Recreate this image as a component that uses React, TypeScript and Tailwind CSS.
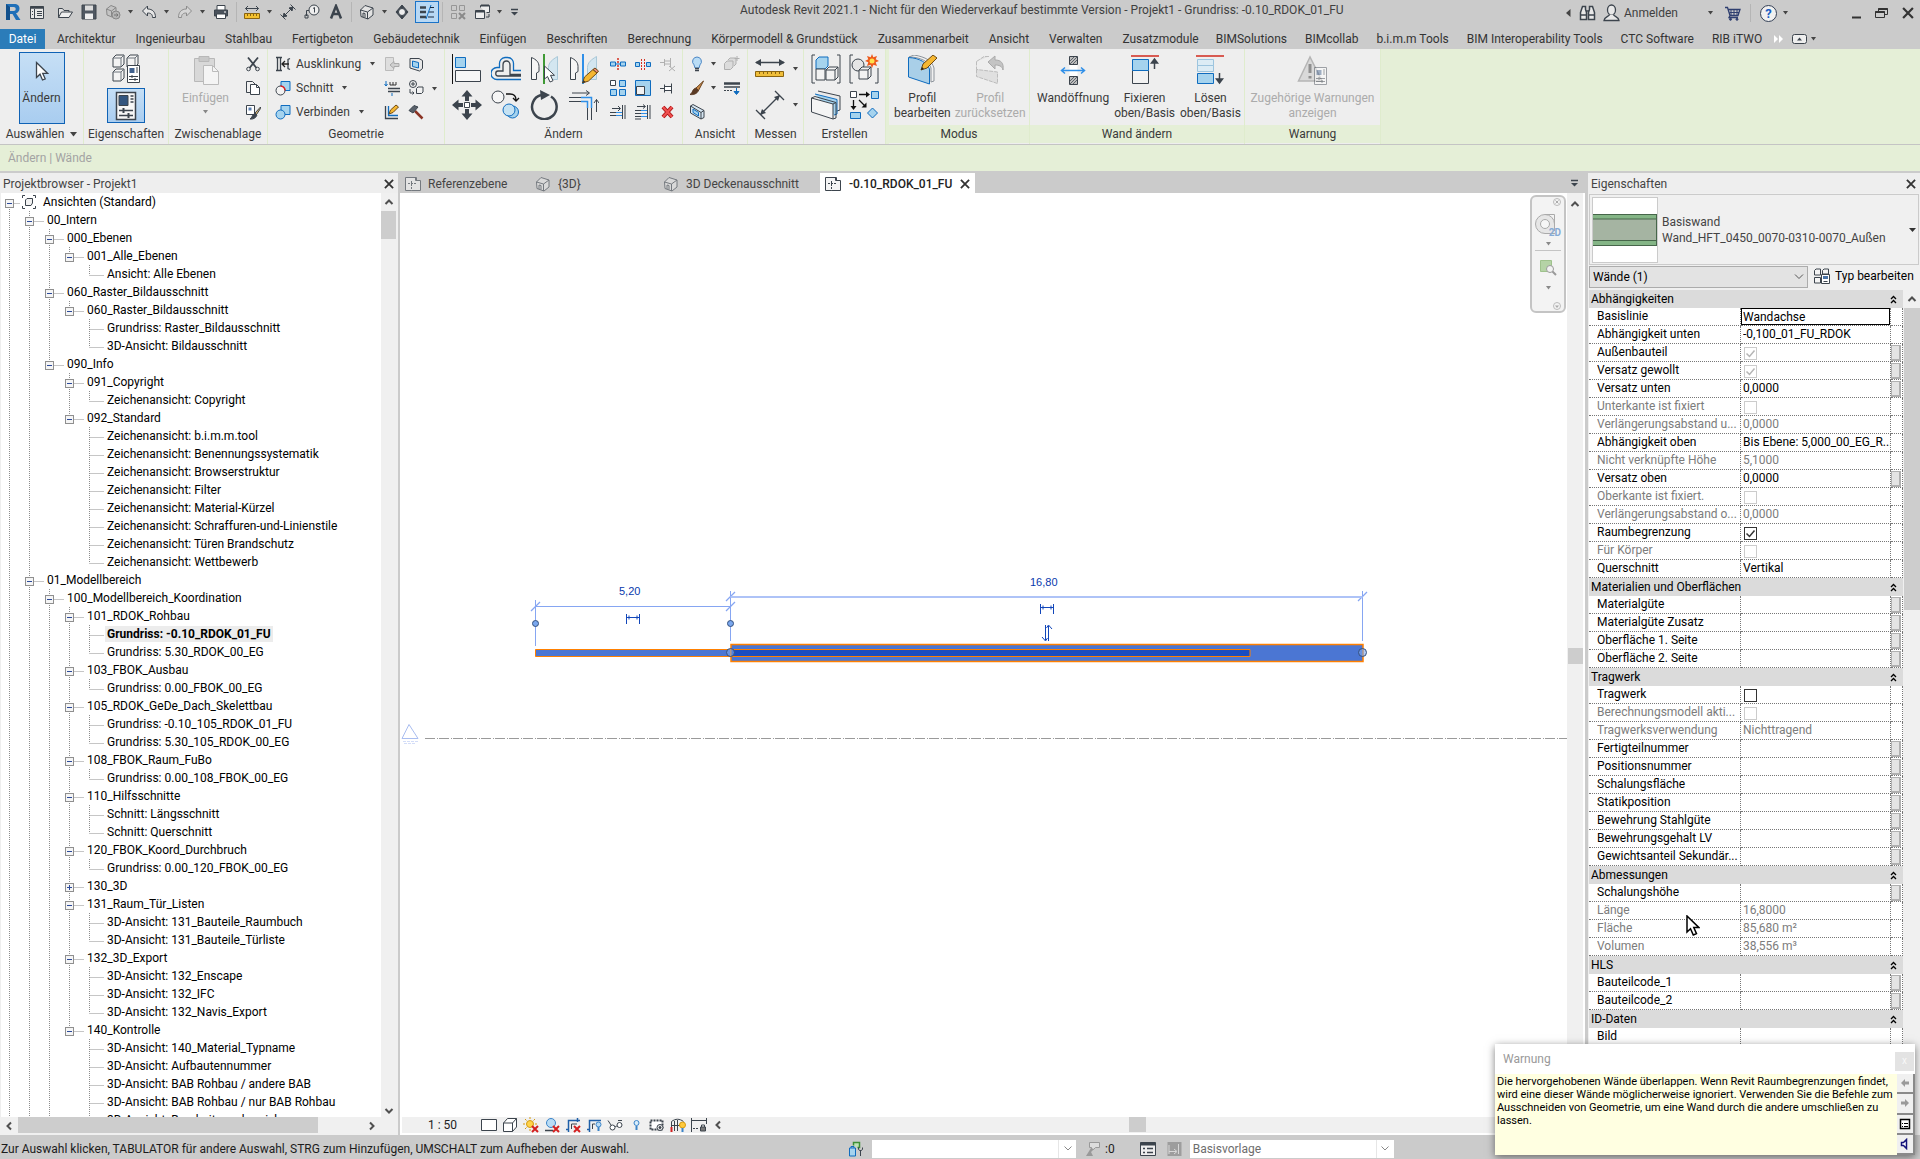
import React from 'react';

const INK = '#3c444d';
const BLUE = '#0f6cbf';
const SKY = '#a5d3ee';

interface IcoProps {
  w?: number;
  h?: number;
  children: React.ReactNode;
  className?: string;
}

function Ico({ w = 16, h = w, children, className = '' }: IcoProps) {
  return (
    <svg
      width={w}
      height={h}
      viewBox={`0 0 ${w} ${h}`}
      fill="none"
      stroke={INK}
      className={`shrink-0 ${className}`}
      aria-hidden="true"
    >
      {children}
    </svg>
  );
}

function Caret({ className = '' }: { className?: string }) {
  return (
    <Ico w={5} h={4} className={className}>
      <path d="M0 0h5L2.5 3.5z" fill="#444" stroke="none" />
    </Ico>
  );
}

function Chevron({ dir, className = '' }: { dir: 'up' | 'down' | 'left' | 'right'; className?: string }) {
  const d = {
    up: 'M1.5 7 5 3.5 8.5 7',
    down: 'M1.5 3 5 6.5 8.5 3',
    left: 'M7 1.5 3.5 5 7 8.5',
    right: 'M3 1.5 6.5 5 3 8.5',
  }[dir];
  return (
    <Ico w={10} className={className}>
      <path d={d} stroke="#505050" strokeWidth="2" />
    </Ico>
  );
}

function CloseX({ size = 11 }: { size?: number }) {
  return (
    <svg width={size} height={size} viewBox="0 0 11 11" stroke="#333" strokeWidth="2" aria-hidden="true">
      <path d="M1 1l9 9M10 1l-9 9" />
    </svg>
  );
}

function Arrow({ className = '' }: { className?: string }) {
  return (
    <Ico w={14} h={21} className={className}>
      <path d="M1.5 1.5v15l3.5-3.3 2.5 5.8 2.7-1.2-2.5-5.5h4.8z" fill="#fff" strokeWidth="1.3" />
    </Ico>
  );
}

/* ---------- quick access toolbar ---------- */

const qat: Record<string, React.ReactNode> = {
  list: (
    <Ico>
      <path d="M1.5 2.5h13v12h-13z" fill="#e8e8e8" />
      <path d="M1.5 3.5h13" strokeWidth="2.5" />
      <path d="M5.5 5v9M8 7.5h5M8 9.5h5M8 11.5h5M3 7.5h1M3 10.5h1" />
    </Ico>
  ),
  open: (
    <Ico>
      <path d="M1.5 13.5v-9h4l1.5 2h5v2" fill="#e4e4e4" />
      <path d="M1.5 13.5l3-5.5h11l-3.5 5.5z" fill="#eee" />
    </Ico>
  ),
  save: (
    <Ico>
      <path d="M1 1h14v14H1z" fill="#505862" />
      <path d="M4 1.5h8v5H4z" fill="#dcdcdc" stroke="none" />
      <path d="M4 9.5h8v5.5H4z" fill="#efefef" stroke="none" />
    </Ico>
  ),
  sync: (
    <Ico>
      <path d="M1.5 5 6 1.5l5 2V9L7 13 2 11z" fill="#c4c4c4" stroke="#888" />
      <path d="M1.5 5l5 2 4.5-3.5M6.5 7v5.5" stroke="#888" />
      <circle cx="11" cy="11" r="4" fill="#b5b5b5" stroke="#888" />
      <path d="M9 11h4M11.5 9.5 13 11l-1.5 1.5" stroke="#777" />
    </Ico>
  ),
  undo: (
    <Ico>
      <path d="M1.5 7l5-5v3c5 0 8 3 8 8.5h-3c0-3.5-2-4.5-5-4.5v3z" fill="#e6e6e6" />
    </Ico>
  ),
  redo: (
    <Ico>
      <path d="M14.5 7l-5-5v3c-5 0-8 3-8 8.5h3c0-3.5 2-4.5 5-4.5v3z" fill="#d6d6d6" stroke="#8c8c8c" />
    </Ico>
  ),
  print: (
    <Ico>
      <path d="M4 6V1.5h8V6" fill="#fff" />
      <path d="M1.5 6h13v6h-13z" fill="#4a525c" />
      <path d="M3.5 10h9v4.5h-9z" fill="#fff" />
      <path d="M11 8h2" stroke="#fff" />
    </Ico>
  ),
  measure: (
    <Ico>
      <path d="M1.5 4.5h13M4 2 1.5 4.5 4 7M12 2l2.5 2.5L12 7" />
      <path d="M.5 9.5h15v5H.5z" fill="#f4c12f" stroke="#8a6410" />
      <path d="M3.5 10v2M6.5 10v2M9.5 10v2M12.5 10v2" stroke="#8a6410" />
    </Ico>
  ),
  dim: (
    <Ico>
      <path d="M3 13 13 3" />
      <path d="M3 13l1-4 3 3zM13 3l-1 4-3-3z" fill={INK} />
      <path d="M.5 10.5l5 5M10.5.5l5 5" />
    </Ico>
  ),
  tag: (
    <Ico>
      <circle cx="10" cy="6" r="5" fill="#eee" />
      <path d="M9 4.5 10.5 3.5v5M5 6.5H2.5V12" />
      <path d="M1 11h3v3H1z" />
    </Ico>
  ),
  text: (
    <Ico>
      <path d="M3 14.5 8 2l5 12.5M5 10h6" strokeWidth="2.5" />
    </Ico>
  ),
  house: (
    <Ico>
      <path d="M1.5 6 6 1.5l8 2.5v7l-5 4-7-2.5z" fill="#e3e3e3" />
      <path d="M1.5 6l7 2 5.5-4M8.5 8v7M4 13V9l2 .5v4" />
    </Ico>
  ),
  section: (
    <Ico w={14} h={16}>
      <path d="M7 1l6 7-6 7-6-7z" fill={INK} />
      <circle cx="7" cy="8" r="3.5" fill="#eee" />
    </Ico>
  ),
  thin: (
    <Ico>
      <path d="M1 3.5h6M1 8h6M1 13h6" strokeWidth="2.5" />
      <path d="M12 1 7 15" stroke={BLUE} />
      <path d="M11 3.5h4M10 8h5M9 13h6" stroke="#1b2b40" />
    </Ico>
  ),
  closeWin: (
    <Ico>
      <path d="M1.5 1.5h5v5h-5zM9.5 1.5h5v5h-5zM1.5 9.5h5v5h-5z" stroke="#979797" />
      <path d="M9 9l6 6M15 9l-6 6" stroke="#8a8a8a" strokeWidth="2" />
    </Ico>
  ),
  switchWin: (
    <Ico>
      <path d="M6.5 3.5V1.5h9v7h-3" fill="#eee" />
      <path d="M1.5 6.5h9v8h-9z" fill="#eee" />
      <path d="M1.5 7.5h9M7 1.5h8" strokeWidth="2" />
      <path d="M12 13h3v-3" />
    </Ico>
  ),
};

function QatButton({ name, label, menu = false }: { name: string; label: string; menu?: boolean }) {
  return (
    <button type="button" aria-label={label} className="flex shrink-0 items-center gap-[7px]">
      {qat[name]}
      {menu && <Caret />}
    </button>
  );
}

function QatSep() {
  return <span className="-mx-px h-5 w-px shrink-0 bg-[#b5b5b5]" />;
}

function TitleBar() {
  return (
    <header className="flex h-[29px] items-start bg-[#cbcbcb] pl-[5px] text-[#3f3f3f]">
      <div className="flex h-6 w-[735px] items-center gap-2">
        <svg width="16" height="18" viewBox="0 0 16 18" aria-hidden="true" className="shrink-0">
          <path d="M1 1h8c4 0 5.5 2 5.5 4.5S13 9.7 11 10.3L15.5 17H11L7.5 11H5v6H1z" fill="#1f6fb8" />
          <path d="M5 4v4h3.5c1.5 0 2.2-.8 2.200-2S10 4 8.500 4z" fill="#cbcbcb" />
          <path d="M1 1l4 3v13H1z" fill="#12508c" />
        </svg>
        <QatButton name="list" label="Anwendungsmenü" />
        <span className="w-1" />
        <div className="-ml-2 flex items-center gap-2">
          <QatButton name="open" label="Öffnen" />
          <QatButton name="save" label="Speichern" />
          <QatButton name="sync" label="Synchronisieren" menu />
          <QatButton name="undo" label="Rückgängig" menu />
          <QatButton name="redo" label="Wiederherstellen" menu />
          <QatButton name="print" label="Drucken" />
        </div>
        <QatSep />
        <QatButton name="measure" label="Messen" menu />
        <QatButton name="dim" label="Bemaßung" />
        <QatButton name="tag" label="Beschriftung" />
        <QatButton name="text" label="Text" />
        <QatSep />
        <QatButton name="house" label="3D-Ansicht" menu />
        <QatButton name="section" label="Schnitt" />
        <div className="-ml-[2px] flex items-center gap-1">
          <button
            type="button"
            aria-label="Dünne Linien"
            className="flex h-[22px] w-6 items-center justify-center border border-[#1a73c8] bg-[#b8d8f4]"
          >
            {qat.thin}
          </button>
          <QatSep />
        </div>
        <QatButton name="closeWin" label="Inaktive Fenster schließen" />
        <QatButton name="switchWin" label="Fenster wechseln" menu />
        <button type="button" aria-label="Anpassen">
          <Ico w={9} h={8}>
            <path d="M1 1.5h7" strokeWidth="1.5" />
            <path d="M1 4h7L4.5 7.5z" fill={INK} stroke="none" />
          </Ico>
        </button>
      </div>
      <h1 className="mt-[2px] whitespace-nowrap leading-4">
        Autodesk Revit 2021.1 - Nicht für den Wiederverkauf bestimmte Version - Projekt1 - Grundriss: -0.10_RDOK_01_FU
      </h1>
      <div className="ml-auto flex h-[26px] items-center pr-[6px]">
        <Ico w={5} h={8} className="mr-2">
          <path d="M4.5 0v8L0 4z" fill="#444" stroke="none" />
        </Ico>
        <button type="button" aria-label="Suchen">
          <Ico w={17} h={16}>
            <path d="M3.5 1.5h3v3l1 3v7h-6v-7zM13.5 1.5h-3v3l-1 3v7h6v-7z" fill="#e8e8e8" strokeWidth="1.5" />
            <path d="M7 6h3M2 10h5M10 10h5" strokeWidth="1.5" />
          </Ico>
        </button>
        <button type="button" className="ml-[7px] flex items-center gap-1">
          <Ico w={17} h={18}>
            <ellipse cx="8.5" cy="6" rx="4" ry="5" fill="#e8e8e8" strokeWidth="1.3" />
            <path d="M6.5 10.5c0 2-5 2-5.5 6h15c-.5-4-5.5-4-5.5-6" fill="#e8e8e8" strokeWidth="1.3" />
          </Ico>
          Anmelden
        </button>
        <Caret className="ml-[30px]" />
        <button type="button" aria-label="Warenkorb" className="ml-3">
          <Ico>
            <path d="M0 2.5h2.5l2.5 8h8l2-6H3.5M5 10.5l-1 2h9" stroke="#2f3f70" strokeWidth="1.3" />
            <path d="M6 5v5M9 5v5M12 5v5M4.5 7.5H14" stroke="#2f3f70" />
            <circle cx="5.5" cy="14.3" r="1" fill="#2f3f70" stroke="#2f3f70" />
            <circle cx="12" cy="14.3" r="1" fill="#2f3f70" stroke="#2f3f70" />
          </Ico>
        </button>
        <span className="mx-[9px] h-[18px] w-px bg-[#b5b5b5]" />
        <button
          type="button"
          aria-label="Hilfe"
          className="flex h-[17px] w-[17px] items-center justify-center rounded-full border border-[#333f55] bg-[#f1f1f1] text-[13px] font-bold leading-none text-[#1b5fc4]"
        >
          ?
        </button>
        <Caret className="ml-[6px]" />
        <div className="ml-16 flex items-center gap-[14px]">
          <button type="button" aria-label="Minimieren">
            <Ico w={9} h={12}>
              <path d="M0 10.5h9" stroke="#333" strokeWidth="2" />
            </Ico>
          </button>
          <button type="button" aria-label="Verkleinern">
            <Ico w={13} h={12}>
              <path d="M3.5 4V1.5h9v6H9.5" stroke="#333" />
              <path d="M.5 4.5h9v6h-9z" stroke="#333" />
              <path d="M3.5 2h9M.5 5h9" stroke="#333" strokeWidth="2" />
            </Ico>
          </button>
          <button type="button" aria-label="Schließen">
            <CloseX size={12} />
          </button>
        </div>
      </div>
    </header>
  );
}

/* ---------- ribbon ---------- */

const ribbonTabs = [
  'Architektur',
  'Ingenieurbau',
  'Stahlbau',
  'Fertigbeton',
  'Gebäudetechnik',
  'Einfügen',
  'Beschriften',
  'Berechnung',
  'Körpermodell & Grundstück',
  'Zusammenarbeit',
  'Ansicht',
  'Verwalten',
  'Zusatzmodule',
];

const addinTabs = [
  'BIMSolutions',
  'BIMcollab',
  'b.i.m.m Tools',
  'BIM Interoperability Tools',
  'CTC Software',
  'RIB iTWO',
];

function RibbonTabs() {
  return (
    <nav className="flex h-5 items-center whitespace-nowrap bg-[#cbcbcb] text-[#333]">
      <button type="button" className="mr-3 h-full w-[45px] shrink-0 bg-[#2b7cb9] text-white">
        Datei
      </button>
      <div className="flex gap-5">
        {ribbonTabs.map((tab) => (
          <button type="button" key={tab}>
            {tab}
          </button>
        ))}
      </div>
      <div className="ml-[17px] flex gap-[18px]">
        {addinTabs.map((tab) => (
          <button type="button" key={tab}>
            {tab}
          </button>
        ))}
      </div>
      <Ico w={10} h={8} className="ml-3">
        <path d="M0 0l4 4-4 4zM5 0l4 4-4 4z" fill="#fff" stroke="none" />
      </Ico>
      <button type="button" aria-label="Multifunktionsleiste minimieren" className="ml-2 flex items-center gap-1">
        <Ico w={15} h={10}>
          <rect x=".5" y=".5" width="14" height="9" rx="2" fill="#eee" />
          <path d="M5 6.5h5L7.5 3.5z" fill={INK} stroke="none" />
        </Ico>
        <Caret />
      </button>
    </nav>
  );
}

interface PanelProps {
  title: string;
  width: string;
  body?: string;
  context?: boolean;
  more?: boolean;
  children: React.ReactNode;
}

function Panel({ title, width, body = '', context = false, more = false, children }: PanelProps) {
  return (
    <section className={`flex shrink-0 flex-col border-r border-[#dfeccd] bg-[#eeeeee] ${width}`}>
      <div className={`flex h-[76px] pt-[3px] ${body}`}>{children}</div>
      <h2
        className={`flex h-[18px] items-center justify-center gap-[6px] whitespace-nowrap ${context ? 'bg-[#e5efd7]' : ''}`}
      >
        {title}
        {more && (
          <Ico w={7} h={5}>
            <path d="M0 0h7L3.5 4.5z" fill="#444" stroke="none" />
          </Ico>
        )}
      </h2>
    </section>
  );
}

function Small({ label, children }: { label: string; children: React.ReactNode }) {
  return (
    <button type="button" aria-label={label} className="flex h-6 items-center">
      {children}
    </button>
  );
}

function SmallText({ text, children }: { text: string; children: React.ReactNode }) {
  return (
    <button type="button" className="flex h-6 items-center gap-[5px]">
      {children}
      {text}
      <Caret className="ml-1" />
    </button>
  );
}

function LargeButton({
  lines,
  disabled = false,
  children,
}: {
  lines: string[];
  disabled?: boolean;
  children: React.ReactNode;
}) {
  return (
    <button
      type="button"
      disabled={disabled}
      className={`flex flex-col items-center whitespace-nowrap leading-[15px] ${disabled ? 'text-[#ababab]' : ''}`}
    >
      <span className="flex h-[39px] items-start pt-[3px]">{children}</span>
      {lines.map((l) => (
        <span key={l}>{l}</span>
      ))}
    </button>
  );
}

function Notch() {
  return (
    <Ico>
      <path d="M1 1.5h6M1 14.5h6M2.5 2v12M5.5 2v12M15 2.5l-2 1v9l2 1" strokeWidth="1.3" />
      <path d="M14 8H7M10 5 7 8l3 3" stroke="#222" strokeWidth="1.3" />
    </Ico>
  );
}

function CutGeo({ joined = false }: { joined?: boolean }) {
  return (
    <Ico>
      <path d="M6 1.5h9v9H6z" fill={SKY} stroke={BLUE} />
      <circle cx="5.5" cy="10.5" r="4.5" fill={joined ? SKY : '#f2f2f2'} stroke={joined ? BLUE : INK} />
      {!joined && <path d="M5.5 6a4.5 4.5 0 0 1 4.5 4.5" stroke="#e02020" strokeWidth="1.5" />}
    </Ico>
  );
}

function Mirror({ pencil = false }: { pencil?: boolean }) {
  return (
    <Ico w={30}>
      <path d="M1.5 3.5c5 2 7.5 5 7.5 9v5l-2.5 1.5v6.5h-5z" fill="#f6f6f6" />
      <path d="M27.5 2.5c-5 3-9 6-9 11v12h9z" fill="#d3e6f0" stroke="#a9c8d8" />
      {pencil ? (
        <>
          <path d="M14 0v30" stroke="#2f8fe8" strokeWidth="2" />
          <path d="M13.5 29l2-6L24 15.5l4 3.5-8.5 8z" fill="#f5b731" stroke="#6f4a12" />
          <path d="M13.5 29l1-3 2 2z" fill="#333" stroke="none" />
          <path d="M24 15.5l2-1.5 3.5 3-1.5 2z" fill="#e98b79" stroke="#6f4a12" />
        </>
      ) : (
        <>
          <path d="M14 0v30" stroke="#3f9a35" strokeWidth="2" />
          <path d="M14.5 12v13l3-2.5 2.5 5.5 3-1.3-2.5-5.4h4z" fill="#fff" />
        </>
      )}
    </Ico>
  );
}

function PropsSheet({ x, y }: { x: number; y: number }) {
  return (
    <g transform={`translate(${x} ${y})`}>
      <path d="M.5.5h12v17H.5z" fill="#fff" />
      <path d="M2.5 3h5v5h-5z" fill="#41628f" stroke="none" />
      <path d="M9 3h2M9 5h2M9 7h2M2 11.5h9M2 14.5h9M5 10v3M8 13v3" />
    </g>
  );
}

function Ribbon() {
  return (
    <div className="flex h-24 border-b border-[#c4c4c4] bg-[#e5efd7] text-[#3a3a3a]">
      <Panel title="Auswählen" width="w-[84px]" body="justify-center" more>
        <button
          type="button"
          className="flex h-[72px] w-[46px] flex-col items-center border border-[#0f62b5] bg-linear-to-b from-[#c6dff5] to-[#a9cdf0] pt-2"
        >
          <Arrow />
          <span className="mt-2 leading-4">Ändern</span>
        </button>
      </Panel>

      <Panel title="Eigenschaften" width="w-[85px]" body="flex-col items-center">
        <button type="button" aria-label="Typeneigenschaften" className="mt-[2px]">
          <Ico w={30}>
            <path d="M2 4l3-3h8v9l-3 3H2zM16 4l3-3h8v9l-3 3h-8zM2 18l3-3h8v9l-3 3H2z" fill="#f3f3f3" />
            <path d="M2 4h8v9M10 4l3-3M16 4h8v9M24 4l3-3M2 18h8v9M10 18l3-3" stroke="#6d747c" />
            <PropsSheet x={16} y={11} />
          </Ico>
        </button>
        <button
          type="button"
          aria-label="Eigenschaften"
          className="mt-1 flex h-[35px] w-[38px] items-center justify-center border border-[#0f62b5] bg-linear-to-b from-[#c6dff5] to-[#a9cdf0]"
        >
          <Ico w={22} h={30}>
            <path d="M1.5 1.5h19v27h-19z" fill="#f7f7f7" strokeWidth="1.5" />
            <path d="M4 4.5h9v10H4z" fill="#34567f" />
            <path d="M15.5 5h3M15.5 8h3M15.5 11h3M4 19.5h14M4 24.5h14" strokeWidth="1.5" />
            <path d="M8.5 17v5M13.5 22v5" strokeWidth="2" />
          </Ico>
        </button>
      </Panel>

      <Panel title="Zwischenablage" width="w-[99px]" body="justify-end gap-4 pr-[6px]">
        <button type="button" disabled className="flex flex-col items-center text-[#ababab]">
          <Ico w={28} h={30} className="mt-[3px]">
            <path d="M2.5 3.5h20v23h-20z" fill="#d8d8d8" stroke="#b8b8b8" />
            <path d="M7 1.5h10v5H7z" fill="#c8c8c8" stroke="#b8b8b8" />
            <path d="M11.5 10.5h9l6 6v13h-15z" fill="#f4f4f4" stroke="#bbb" />
            <path d="M20.5 10.5v6h6" stroke="#bbb" />
          </Ico>
          <span className="mt-[5px] leading-4">Einfügen</span>
          <Caret className="mt-1 opacity-60" />
        </button>
        <div className="flex flex-col">
          <Small label="Ausschneiden">
            <Ico>
              <path d="M3 1.5 11.5 12M13 1.5 4.5 12" strokeWidth="1.8" />
              <circle cx="3.5" cy="13" r="1.8" />
              <circle cx="12.5" cy="13" r="1.8" />
            </Ico>
          </Small>
          <Small label="Kopieren">
            <Ico>
              <path d="M1.5 1.5h6l3 3v8h-9z" fill="#f2f2f2" />
              <path d="M5.5 4.5h6l3 3v7h-9z" fill="#fff" />
              <path d="M11.5 4.5v3h3" />
            </Ico>
          </Small>
          <Small label="Typeneigenschaften anpassen">
            <Ico>
              <path d="M1.5 1.5h8v9h-8z" fill="#fff" />
              <path d="M3.5 3.5h3v3h-3z" fill="#5a7fb0" stroke="none" />
              <path d="M15.5 3 10 9l1.5 1.5 4-6z" fill="#d8b26a" />
              <path d="M10 9l2 2c-1 3-4 4.5-7 4 2-1 2-4 5-6z" fill={INK} />
            </Ico>
          </Small>
        </div>
      </Panel>

      <Panel title="Geometrie" width="w-[177px]" body="pl-[7px]">
        <div className="flex w-[109px] flex-col">
          <SmallText text="Ausklinkung">
            <Notch />
          </SmallText>
          <SmallText text="Schnitt">
            <CutGeo />
          </SmallText>
          <SmallText text="Verbinden">
            <CutGeo joined />
          </SmallText>
        </div>
        <div className="flex flex-col">
          <Small label="Verbindung">
            <Ico>
              <path d="M1.5 1.5h8v13h-8z" fill="#dedede" stroke="#bbb" />
              <path d="M6 9l4-3.5V7.5h5v3h-5v2z" fill="#d0d0d0" stroke="#aaa" />
            </Ico>
          </Small>
          <Small label="Bauteil ausschneiden">
            <Ico>
              <path d="M2 1v5M.5 4 2 6l1.5-2" stroke={BLUE} />
              <path d="M6 2v3h6V2M9 2v3" stroke="#333" />
              <path d="M4 8.5h12M4 11.5h12" strokeWidth="1.5" />
              <path d="M8 13v3" stroke={BLUE} />
            </Ico>
          </Small>
          <Small label="Wandverbindung">
            <Ico>
              <path d="M1.5 2v12.5H14" strokeWidth="1.3" />
              <path d="M4.5 2v9.5H14" stroke={BLUE} strokeWidth="1.3" />
              <path d="M5 10l1.5-4L12 1l2.5 2L9 8.5z" fill="#f5b731" stroke="#6f4a12" />
            </Ico>
          </Small>
        </div>
        <div className="ml-2 flex flex-col">
          <Small label="Öffnung">
            <Ico>
              <path d="M2 2.5h9l3.5 2v8l-3 2.5-9.5-3z" fill="#e8e8e8" />
              <path d="M4.5 5l6 1.5v5.5l-6-1.5z" fill={SKY} stroke={BLUE} />
            </Ico>
          </Small>
          <Small label="Phase">
            <Ico>
              <circle cx="5" cy="4" r="3.5" />
              <path d="M3 4h4M5 2v4M2 9v4h4M4.5 11.5 6 13l-1.5 1.5" />
              <path d="M8.5 8.5l1.5-1.5h5v5l-1.5 1.5h-5z" fill="#f2f2f2" />
            </Ico>
          </Small>
          <Small label="Abbruch">
            <Ico>
              <path d="M7 7l7.5 7.5" stroke="#8a3324" strokeWidth="2.5" />
              <path d="M1 6.5 6 1.5l4 1.5L5 9z" fill="#58606a" />
            </Ico>
          </Small>
        </div>
        <Caret className="ml-2 mt-[35px]" />
      </Panel>

      <Panel title="Ändern" width="w-[238px]" body="gap-[11px] pl-[7px]">
        <div className="grid grid-cols-4 gap-x-[9px] gap-y-[6px] self-start pt-[2px]">
          <button type="button" aria-label="Ausrichten">
            <Ico w={30}>
              <path d="M.5 0v30" stroke="#111" />
              <path d="M3.5 3.5h10v10h-10z" fill={SKY} stroke={BLUE} />
              <path d="M3.5 16.5h25v11h-25z" fill="#f6f6f6" />
            </Ico>
          </button>
          <button type="button" aria-label="Versatz">
            <Ico w={30}>
              <path
                d="M30 16.5h-7.5V10a6 6 0 0 0-6-6.500H14A6 6 0 0 0 8.500 10v3.500H6a5 5 0 0 0 0 12h24"
                stroke={BLUE}
                strokeWidth="1.3"
              />
              <path d="M30 20.5H19V11c0-2.500-1.500-4-3.500-4S12 8.500 12 11v6H7c-3 0-3 5 0 5h23" strokeWidth="1.3" />
            </Ico>
          </button>
          <button type="button" aria-label="Spiegeln - Achse wählen">
            <Mirror />
          </button>
          <button type="button" aria-label="Spiegeln - Achse zeichnen">
            <Mirror pencil />
          </button>
          <button type="button" aria-label="Verschieben">
            <Ico w={30}>
              <path
                d="M15 0l5.5 6.5H17V11h-4V6.5H9.5zM15 30l5.5-6.5H17V19h-4v4.5H9.5zM0 15l6.5-5.5V13H11v4H6.5v3.5zM30 15l-6.5-5.5V13H19v4h4.5v3.5z"
                fill={INK}
                stroke="none"
              />
              <path d="M12.5 12.5h5v5h-5z" fill="#fff" />
            </Ico>
          </button>
          <button type="button" aria-label="Kopieren">
            <Ico w={30}>
              <circle cx="7" cy="7" r="6" fill="#f6f6f6" />
              <path d="M15 4h4c4 0 6 2 6 6M22 8l3 3 3-3" stroke="#111" strokeWidth="1.3" />
              <circle cx="21.5" cy="22" r="6" fill={SKY} stroke={BLUE} />
              <circle cx="18" cy="20" r="6" fill="#c5e2f3" stroke={BLUE} />
            </Ico>
          </button>
          <button type="button" aria-label="Drehen">
            <Ico w={30}>
              <path d="M21 6.5A12.3 12.3 0 1 1 11 5" strokeWidth="2.5" />
              <path d="M10 0l10 5-9 5z" fill={INK} stroke="none" />
            </Ico>
          </button>
          <button type="button" aria-label="Stutzen/Dehnen">
            <Ico w={30}>
              <path d="M3 3h17M17 .5 20.5 3 17 5.5M0 7.5h12M0 11.5h12M18.5 18v12M22.5 18v12" />
              <path d="M12 7.5h10.5V18M12 11.5h6.5V18" stroke="#2f8fe8" strokeWidth="1.5" />
              <path d="M27.5 22V9.5M25 13l2.5-3.5L30 13" />
            </Ico>
          </button>
        </div>
        <div className="grid grid-cols-3 gap-x-[9px] self-start">
          <Small label="Element teilen">
            <Ico>
              <path d="M.5 6h5v4h-5zM10.5 6h5v4h-5z" fill={SKY} stroke={BLUE} />
              <path d="M5.500 8h5" stroke={BLUE} />
              <path d="M8 2v2M8 5v2M8 9v2M8 12v2" stroke="#d42f20" strokeWidth="1.5" />
            </Ico>
          </Small>
          <Small label="Mit Lücke teilen">
            <Ico>
              <path d="M.5 6.5h4v4h-4zM11.5 6.5h4v4h-4z" fill={SKY} stroke={BLUE} />
              <path d="M6.5 3v11M9.5 3v11" stroke="#d42f20" strokeDasharray="2 1" />
            </Ico>
          </Small>
          <Small label="Fixierung lösen">
            <Ico>
              <path d="M0 6.500h4M4.500 3v7M5 5h5M5 8h5M10.500 2v9M9 10l6 5M15 10l-6 5" stroke="#b0b0b0" />
            </Ico>
          </Small>
          <Small label="Reihe">
            <Ico>
              <path d="M.5.5h5v5h-5z" fill="#fff" />
              <path d="M9.5.5h6v6h-6zM.5 9.5h6v6h-6zM9.5 9.5h6v6h-6z" fill={SKY} stroke={BLUE} />
            </Ico>
          </Small>
          <Small label="Maßstab">
            <Ico>
              <path d="M.5.5h15v15H.5z" fill={SKY} stroke={BLUE} />
              <path d="M1.5 6.5h8v8h-8z" fill="#f2f2f2" />
            </Ico>
          </Small>
          <Small label="Fixieren">
            <Ico>
              <path d="M0 8.500h4M4.500 4.500v8M5 6.500h6M5 10.500h6M11.500 3.500v10" />
              <path d="M5 7h6v3H5z" fill="#fff" stroke="none" />
            </Ico>
          </Small>
          <Small label="Element stutzen">
            <Ico>
              <path d="M2 4.5h8M8 2l2.5 2.5L8 7M0 8.5h6M0 11.5h6M12.5 1v14M15 1v14" />
              <path d="M6 8.5h6M6 11.5h6" stroke="#2f8fe8" />
            </Ico>
          </Small>
          <Small label="Mehrere Elemente stutzen">
            <Ico>
              <path d="M2 2.5h8M8 .5l2.5 2L8 4.5M0 6.5h6M0 9.5h6M0 12.5h6M0 15h6M12.5 1v14M15 1v14" />
              <path d="M6 6.5h6M6 9.5h6M6 12.5h6" stroke="#2f8fe8" />
            </Ico>
          </Small>
          <Small label="Löschen">
            <Ico>
              <path d="M3 3l9 10M12 3 3 13" stroke="#b01818" strokeWidth="4" />
              <path d="M3 3l9 10M12 3 3 13" stroke="#f05050" strokeWidth="2" />
            </Ico>
          </Small>
        </div>
      </Panel>

      <Panel title="Ansicht" width="w-[65px]" body="gap-2 pl-[6px]">
        <div className="flex flex-col">
          <button type="button" aria-label="Ausblenden" className="flex h-6 items-center gap-[6px]">
            <Ico>
              <path d="M8 1a4.5 4.5 0 0 1 3 7.8L10 12H6L5 8.8A4.5 4.5 0 0 1 8 1z" fill="#b9dcf5" stroke="#4b86c4" />
              <path d="M6 12.5h4M6 14.5h4" strokeWidth="1.5" />
            </Ico>
            <Caret />
          </button>
          <button type="button" aria-label="Grafik überschreiben" className="flex h-6 items-center gap-[6px]">
            <Ico>
              <path d="M14.5 1 7 8l2.5 2.5z" fill="#c98a48" stroke="#6b4420" />
              <path d="M7 8l2.5 2.5C8 14 4 15 1 14.5 4 13 3 9 7 8z" fill="#5a3a24" stroke="#5a3a24" />
            </Ico>
            <Caret />
          </button>
          <Small label="Auswahlbox">
            <Ico>
              <path d="M1.5 2 4 .5l11 6v7L12 15 1.5 9z" fill="#d6e6f2" />
              <path d="M1.5 2 12 8.5V15M12 8.5l3-2" />
              <path d="M4 5l5.5 3.5v3.5L4 8.5z" fill={SKY} stroke={BLUE} />
            </Ico>
          </Small>
        </div>
        <div className="flex flex-col">
          <Small label="Verschieben">
            <Ico>
              <path d="M.5 7.5 3 5h6v6l-2.5 2.5h-6zM4 4l2-2h6v6l-2 2" fill="#dcdcdc" stroke="#b0b0b0" />
              <path d="M13 0v5M10.5 2.5h5" stroke="#b0b0b0" />
            </Ico>
          </Small>
          <Small label="Linienwerk">
            <Ico>
              <path d="M0 3.5h16" strokeWidth="2.5" />
              <path d="M0 7h16" strokeWidth="1.5" />
              <path d="M0 10.5h9" strokeDasharray="2 1" />
              <path d="M12.5 8v6M10 11.5l2.5 3 2.5-3z" stroke={BLUE} fill={BLUE} />
            </Ico>
          </Small>
        </div>
      </Panel>

      <Panel title="Messen" width="w-[56px]" body="flex-col gap-[6px] pl-[7px] pt-[5px]">
        <button type="button" aria-label="Abstand messen" className="flex items-center gap-2">
          <Ico w={30}>
            <path d="M1 8.5h28" strokeWidth="1.5" />
            <path d="M0 8.5 6 5v7zM30 8.5 24 5v7z" fill={INK} stroke="none" />
            <path d="M.5 17.5h28v5H.5z" fill="#f0be3a" stroke="#8a6410" />
            <path d="M4.5 18v2M8.5 18v2M12.5 18v2M16.5 18v2M20.5 18v2M24.5 18v2" stroke="#8a6410" />
          </Ico>
          <Caret />
        </button>
        <button type="button" aria-label="Bemaßung" className="flex items-center gap-2">
          <Ico w={30}>
            <path d="M6 24 24 6M1 20l9 9M20 1l9 9" strokeWidth="1.3" />
            <path d="M5 25l2-6 4 4zM25 5l-2 6-4-4z" fill={INK} stroke="none" />
          </Ico>
          <Caret />
        </button>
      </Panel>

      <Panel title="Erstellen" width="w-[82px]" body="justify-center pt-[5px]">
        <div className="grid grid-cols-2 gap-x-2 gap-y-[6px] self-start">
          <button type="button" aria-label="Bauteile erstellen">
            <Ico w={30}>
              <path d="M4 1H1v28h3M26 1h3v28h-3" />
              <path d="M5 6l3-3h9v9l-3 3H5z" fill={SKY} stroke={BLUE} />
              <path d="M5 15h9v11H5zM15 16l3-3h9v10l-3 3h-9z" fill="#f2f2f2" />
              <path d="M15 16h9v10M24 16l3-3" />
            </Ico>
          </button>
          <button type="button" aria-label="Gruppe erstellen">
            <Ico w={30}>
              <path d="M4 1H1v28h3M26 29h3V14" />
              <circle cx="9" cy="11" r="6" fill="#e5e5e5" />
              <path d="M10 16l3-3h9v9l-3 3h-9z" fill="#f2f2f2" />
              <path d="M10 16h9v9M19 16l3-3" />
              <path
                d="M23 0l1.300 3.300L28 2l-1.300 3.300L30 7l-3.300 1.300L28 12l-3.500-1.300L23 14l-1.500-3.300L18 12l1.300-3.700L16 7l3.300-1.700L18 2l3.700 1.300z"
                fill="#ee5a1c"
                stroke="none"
              />
              <circle cx="23" cy="7" r="2.5" fill="#ffe14a" stroke="none" />
            </Ico>
          </button>
          <button type="button" aria-label="Baugruppe erstellen">
            <Ico w={30}>
              <path d="M7 1l22 5v14l-3 1" fill="#e9e9e9" />
              <path d="M4 4l22 5.5V24l-3 1" fill={SKY} stroke={BLUE} />
              <path d="M.5 8 22 14v15L.5 22z" fill="#f4f4f4" />
              <path d="M.5 8 4 6.5l21 6L22 14M25 12.5V28l-3 1" />
            </Ico>
          </button>
          <button type="button" aria-label="Ähnliche erstellen">
            <Ico w={30}>
              <path d="M1.5 1.5h6v6h-6z" fill="#fff" />
              <path d="M22.5 1.5h7v7h-7zM1.5 22.5h10v6h-10zM23.5 18l5 5-5 5-5-5z" fill={SKY} stroke={BLUE} />
              <path d="M10 4.5h8M4.5 10v7M10 10l6 6" stroke="#111" strokeWidth="1.3" />
              <path d="M17 1.5l4 3-4 3zM1.5 16l3 4 3-4zM17.5 12.5v5h-5z" fill="#111" stroke="none" />
            </Ico>
          </button>
        </div>
      </Panel>

      <div className="w-[3px] shrink-0" />

      <Panel title="Modus" width="w-[141px]" body="gap-1 pl-[5px]" context>
        <LargeButton lines={['Profil', 'bearbeiten']}>
          <Ico w={32} h={30}>
            <path d="M3 2c12 0 20 5 22 11v14l3-1V13C26 6 20 2 8 0z" fill="#f0f0f0" stroke="#8d949b" />
            <path d="M2.5 2.5C14 3 21 8 23.5 14v15L2.5 22z" fill="#a9cfe8" stroke={BLUE} />
            <path d="M15 15l2-6L27 0l4 3-10 10z" fill="#f5b731" stroke="#6f4a12" />
            <path d="M15 15l1-3 2 2z" fill="#222" stroke="none" />
          </Ico>
        </LargeButton>
        <LargeButton lines={['Profil', 'zurücksetzen']} disabled>
          <Ico w={32} h={30}>
            <path
              d="M2.5 6.5 10 1.5h5M2.5 6.5v8M2.5 14.5v7l21 7V17z"
              fill="#e0e0e0"
              stroke="#bcbcbc"
              strokeDasharray="4 1"
            />
            <path d="M14 7l7-6v4c6 0 9 3 8 10-1-4-4-5-8-5v4z" fill="#c4c4c4" stroke="#aaa" />
          </Ico>
        </LargeButton>
      </Panel>

      <Panel title="Wand ändern" width="w-[215px]" body="gap-[5px] pl-[7px]" context>
        <LargeButton lines={['Wandöffnung']}>
          <Ico w={30}>
            <path d="M11.5 1.5h8v8h-8zM11.5 21.5h8v8h-8z" fill="#bdbdbd" />
            <path d="M12 6l4-4M12 9l7-7M15 9l4-4M12 26l4-4M12 29l7-7M15 29l4-4" stroke="#5c636b" />
            <path d="M11.5 10h8v11h-8z" fill="#fff" stroke="none" />
            <path d="M4 15.5h22M7 12.5l-3.5 3L7 18.500M23 12.500l3.500 3-3.500 3" stroke="#2f8fe8" strokeWidth="1.5" />
          </Ico>
        </LargeButton>
        <LargeButton lines={['Fixieren', 'oben/Basis']}>
          <Ico w={30}>
            <path d="M1 1h28" stroke="#d02a1e" strokeWidth="1.5" />
            <path d="M2.5 15.5h16v13h-16z" fill="#f2f2f2" />
            <path d="M2.5 4.5h16v11h-16z" fill={SKY} stroke={BLUE} />
            <path d="M24.5 14V5M21.5 8l3-4 3 4z" fill={INK} strokeWidth="1.5" />
          </Ico>
        </LargeButton>
        <LargeButton lines={['Lösen', 'oben/Basis']}>
          <Ico w={30}>
            <path d="M1 1h28" stroke="#d02a1e" strokeWidth="1.5" />
            <path d="M2.5 4.5h16v6h-16zM2.5 10.5h16v6h-16z" fill="#dcecf5" stroke="#9cc4de" />
            <path d="M2.5 18.5h16v10h-16z" fill={SKY} stroke={BLUE} />
            <path d="M24.5 18v9M21.5 24l3 4 3-4z" fill={INK} strokeWidth="1.5" />
          </Ico>
        </LargeButton>
      </Panel>

      <Panel title="Warnung" width="w-[136px]" body="justify-center" context>
        <LargeButton lines={['Zugehörige Warnungen', 'anzeigen']} disabled>
          <Ico w={32} h={30}>
            <path d="M13 2 1.5 26H25z" fill="#d9d9d9" stroke="#b5b5b5" strokeWidth="1.5" />
            <path d="M13 9v9M13 21v2.5" stroke="#8f8f8f" strokeWidth="3" />
            <g opacity=".45">
              <PropsSheet x={17} y={12} />
            </g>
          </Ico>
        </LargeButton>
      </Panel>
    </div>
  );
}

/* ---------- project browser ---------- */

interface TreeRow {
  level: number;
  text: string;
  state?: 'open' | 'closed';
  active?: boolean;
}

const node = (level: number, text: string, state: 'open' | 'closed' = 'open'): TreeRow => ({ level, text, state });
const views = (prefix: string, ...names: string[]): TreeRow[] =>
  names.map((n) => ({ level: 4, text: `${prefix}: ${n}` }));

const tree: TreeRow[] = [
  node(0, 'Ansichten (Standard)'),
  node(1, '00_Intern'),
  node(2, '000_Ebenen'),
  node(3, '001_Alle_Ebenen'),
  ...views('Ansicht', 'Alle Ebenen'),
  node(2, '060_Raster_Bildausschnitt'),
  node(3, '060_Raster_Bildausschnitt'),
  ...views('Grundriss', 'Raster_Bildausschnitt'),
  ...views('3D-Ansicht', 'Bildausschnitt'),
  node(2, '090_Info'),
  node(3, '091_Copyright'),
  ...views('Zeichenansicht', 'Copyright'),
  node(3, '092_Standard'),
  ...views(
    'Zeichenansicht',
    'b.i.m.m.tool',
    'Benennungssystematik',
    'Browserstruktur',
    'Filter',
    'Material-Kürzel',
    'Schraffuren-und-Linienstile',
    'Türen Brandschutz',
    'Wettbewerb',
  ),
  node(1, '01_Modellbereich'),
  node(2, '100_Modellbereich_Koordination'),
  node(3, '101_RDOK_Rohbau'),
  { level: 4, text: 'Grundriss: -0.10_RDOK_01_FU', active: true },
  ...views('Grundriss', '5.30_RDOK_00_EG'),
  node(3, '103_FBOK_Ausbau'),
  ...views('Grundriss', '0.00_FBOK_00_EG'),
  node(3, '105_RDOK_GeDe_Dach_Skelettbau'),
  ...views('Grundriss', '-0.10_105_RDOK_01_FU', '5.30_105_RDOK_00_EG'),
  node(3, '108_FBOK_Raum_FuBo'),
  ...views('Grundriss', '0.00_108_FBOK_00_EG'),
  node(3, '110_Hilfsschnitte'),
  ...views('Schnitt', 'Längsschnitt', 'Querschnitt'),
  node(3, '120_FBOK_Koord_Durchbruch'),
  ...views('Grundriss', '0.00_120_FBOK_00_EG'),
  node(3, '130_3D', 'closed'),
  node(3, '131_Raum_Tür_Listen'),
  ...views('3D-Ansicht', '131_Bauteile_Raumbuch', '131_Bauteile_Türliste'),
  node(3, '132_3D_Export'),
  ...views('3D-Ansicht', '132_Enscape', '132_IFC', '132_Navis_Export'),
  node(3, '140_Kontrolle'),
  ...views(
    '3D-Ansicht',
    '140_Material_Typname',
    'Aufbautennummer',
    'BAB Rohbau / andere BAB',
    'BAB Rohbau / nur BAB Rohbau',
    'Bearbeitungsbereiche',
  ),
];

// Does the guide of this level run on below row i?
function continues(i: number, level: number) {
  for (let k = i + 1; k < tree.length; k++) {
    if (tree[k].level === level) return true;
    if (tree[k].level < level) return false;
  }
  return level !== 3;
}

function TreeItem({ row, index }: { row: TreeRow; index: number }) {
  const cx = row.level * 20 + 9.5;
  const width = row.level * 20 + 25;
  return (
    <li className="flex h-[18px] items-center whitespace-nowrap">
      <button type="button" aria-label={row.text} tabIndex={row.state ? 0 : -1} className="shrink-0">
        <svg width={width} height="18" fill="none" aria-hidden="true" className="block">
          <g stroke="#8c8c8c" strokeDasharray="1 1">
            {Array.from({ length: row.level }, (_, l) =>
              continues(index, l) ? <path key={l} d={`M${l * 20 + 9.5} 0v18`} /> : null,
            )}
            {index > 0 && <path d={`M${cx} 0v10`} />}
            {continues(index, row.level) && <path d={`M${cx} 10v8`} />}
            <path d={`M${cx} 10.5H${width - (row.level ? 1 : 5)}`} />
          </g>
          {row.state && (
            <>
              <rect x={cx - 4} y="6.5" width="8" height="8" fill="#f5f5f5" stroke="#8f8f8f" />
              <path d={`M${cx - 2.5} 10.5h5`} stroke="#2c4a9a" />
              {row.state === 'closed' && <path d={`M${cx} 8v5`} stroke="#2c4a9a" />}
            </>
          )}
        </svg>
      </button>
      {row.level === 0 && (
        <Ico w={16} className="-ml-1 mr-1">
          <path d="M4 1.5H1.5V4M12 1.5h2.5V4M4 14.5H1.5V12M12 14.5h2.5V12" />
          <path d="M4.5 6l1.5-1.5h5.5V9L10 11.5H4.5z" fill="#f2f2f2" />
        </Ico>
      )}
      <span className={row.active ? 'bg-[#ececec] px-[2px] font-bold' : 'px-[2px]'}>{row.text}</span>
    </li>
  );
}

function PaneHeader({ title }: { title: string }) {
  return (
    <div className="flex h-5 shrink-0 items-center justify-between bg-[#eeeeee] pl-[3px] pr-1 pt-[2px] text-[#444]">
      <h2>{title}</h2>
      <button type="button" aria-label={`${title} schließen`}>
        <CloseX size={10} />
      </button>
    </div>
  );
}

function ProjectBrowser() {
  return (
    <aside className="flex w-[398px] shrink-0 flex-col bg-[#eeeeee]">
      <PaneHeader title="Projektbrowser - Projekt1" />
      <div className="flex min-h-0 flex-1">
        <ul className="min-w-0 flex-1 overflow-hidden border-l border-[#eeeeee] bg-white text-black">
          <li className="-ml-px">
            <ul>
              {tree.map((row, i) => (
                <TreeItem key={i} row={row} index={i} />
              ))}
            </ul>
          </li>
        </ul>
        <div className="flex w-[17px] shrink-0 flex-col items-center bg-[#f0f0f0] pr-[2px]">
          <Chevron dir="up" className="my-1" />
          <div className="h-7 w-[15px] shrink-0 bg-[#cdcdcd]" />
          <Chevron dir="down" className="mb-px mt-auto" />
        </div>
      </div>
      <div className="flex h-[18px] shrink-0 items-start bg-[#f0f0f0] pr-[19px]">
        <Chevron dir="left" className="m-1" />
        <div className="h-4 w-[300px] bg-[#cdcdcd]" />
        <Chevron dir="right" className="my-1 ml-auto mr-[2px]" />
      </div>
    </aside>
  );
}

/* ---------- drawing area ---------- */

function SheetIcon({ faded = false }: { faded?: boolean }) {
  return (
    <Ico className={faded ? 'opacity-60' : ''}>
      <path d="M.5 1.5h10v13H.5z" fill="#f4f4f4" />
      <path d="M6.5 4.5h9v10h-9z" fill="#f4f4f4" stroke="none" />
      <path d="M10.500 4.500h5v10H6.500M7.500 1.500h4v3" />
      <path d="M3 7.500h8M6.500 5v9" strokeDasharray="2 1" />
    </Ico>
  );
}

const viewTabs = [
  { name: 'Referenzebene', width: 'w-[130px]', house: false },
  { name: '{3D}', width: 'w-[128px]', house: true },
  { name: '3D Deckenausschnitt', width: 'w-[157px]', house: true },
];

function ViewTabs() {
  return (
    <div className="flex h-5 shrink-0 items-center bg-[#cbcbcb] pl-[5px] text-[#444]">
      {viewTabs.map((t) => (
        <button type="button" key={t.name} className={`flex items-center gap-[7px] whitespace-nowrap pt-px ${t.width}`}>
          {t.house ? <span className="opacity-60">{qat.house}</span> : <SheetIcon faded />}
          {t.name}
        </button>
      ))}
      <div className="flex h-full items-center gap-2 bg-white px-[5px] pt-px font-medium text-[#222]">
        <SheetIcon />
        <span className="whitespace-nowrap">-0.10_RDOK_01_FU</span>
        <button type="button" aria-label="Ansicht schließen">
          <CloseX size={10} />
        </button>
      </div>
      <button type="button" aria-label="Registerkarten" className="ml-auto mr-[6px]">
        <Ico w={9} h={8}>
          <path d="M1 1.5h7" strokeWidth="1.5" />
          <path d="M1 4h7L4.5 7.5z" fill={INK} stroke="none" />
        </Ico>
      </button>
    </div>
  );
}

function Drawing() {
  return (
    <svg
      viewBox="400 193 1167 925"
      preserveAspectRatio="xMinYMin slice"
      fill="none"
      className="block h-full w-full"
      fontFamily="'Liberation Sans', Arial, sans-serif"
      fontSize="11"
    >
      {/* reference plane with its marker */}
      <path d="M425 738.5h1142" stroke="#9a9a9a" strokeDasharray="10 2 1 1" />
      <path d="M402 738.5l7-14 9 14z" stroke="#a9bdf0" />
      <path d="M403 741.5h15M404 743.5h12" stroke="#d3ddf8" strokeDasharray="3 1" />

      {/* walls */}
      <path d="M535.5 649.5H731v7H535.5z" fill="#4b76d3" stroke="#ff8000" />
      <path d="M731 644.5h632v17H731z" fill="#4b76d3" stroke="#ff8000" strokeWidth="1.5" />
      <path d="M731 649.5h519v7H731z" fill="#1a4dc0" stroke="#ff8000" />

      {/* dimension lines */}
      <g stroke="#86a6f2">
        <path d="M535.5 600v46M730.5 591v50M1362.5 591v50M535.5 606.5h195" />
        <path d="M531 611l9-9M726 611l9-9M726 601l9-9M1358 601l9-9" strokeWidth="1.3" />
        <path d="M730.5 597h632" stroke="#aec3f7" strokeWidth="2" />
      </g>

      <g fill="#7aa7ee" stroke="#34507e">
        <circle cx="535.5" cy="623.5" r="3" />
        <circle cx="730.5" cy="623.5" r="3" />
        <g fillOpacity=".6">
          <circle cx="730.5" cy="652.5" r="4" />
          <circle cx="1362.5" cy="652.5" r="4" />
        </g>
      </g>

      <g stroke="#1247ba">
        <path d="M626.5 614v10M639.5 614v10M627 617.5h12M629 615.5v4M637 615.5v4" />
        <path d="M1040.5 604v10M1053.5 604v10M1041 607.5h12M1043 605.5v4M1051 605.5v4" />
        <path d="M1045.5 625v15M1042 637l3.500 4 2-3M1048.500 641v-15M1052 629l-3.500-4-2 3" />
      </g>
      <g fill="#0838ac">
        <text x="619" y="595">5,20</text>
        <text x="1030" y="586">16,80</text>
      </g>
    </svg>
  );
}

function NavBar() {
  return (
    <div className="absolute right-px top-[2px] flex h-[118px] w-9 flex-col items-center rounded-md border-2 border-[#c4c4c4] bg-[#f3f3f3]">
      <button type="button" aria-label="Navigationsleiste schließen" className="mr-[3px] mt-px self-end">
        <Ico w={8}>
          <circle cx="4" cy="4" r="3.5" stroke="#bbb" />
          <path d="M2.5 2.5l3 3M5.5 2.5l-3 3" stroke="#aaa" />
        </Ico>
      </button>
      <button type="button" aria-label="2D-Navigationsrad" className="relative mt-2">
        <Ico w={26} h={24}>
          <path d="M20 19.5H10A9.5 9.5 0 1 1 19.5 10V17" fill="#e6e6e6" stroke="#aaa" />
          <path d="M10 .5h9.500V10" stroke="#aaa" />
          <circle cx="10" cy="10" r="4.5" fill="#f6f6f6" stroke="#aaa" />
        </Ico>
        <span className="absolute bottom-0 right-0 text-[10px] font-bold leading-[10px] text-[#86abd6]">2D</span>
      </button>
      <Caret className="mt-1 opacity-60" />
      <span className="my-1 h-px w-[26px] bg-[#c4c4c4]" />
      <button type="button" aria-label="Zoom" className="mt-1">
        <Ico w={18}>
          <path d="M1.5 1.5h11v11h-11z" fill="#b5d3a6" stroke="#9fc28d" />
          <circle cx="11" cy="10" r="3.5" fill="#f3f3f3" stroke="#9a9a9a" />
          <path d="M13.5 12.5 17 16" stroke="#9a9a9a" strokeWidth="2" />
        </Ico>
      </button>
      <Caret className="mt-[9px] opacity-60" />
      <button type="button" aria-label="Optionen" className="mb-px mr-[3px] mt-auto self-end">
        <Ico w={8}>
          <circle cx="4" cy="4" r="3.5" stroke="#bbb" />
          <path d="M2 3.5h4L4 6z" fill="#aaa" stroke="none" />
        </Ico>
      </button>
    </div>
  );
}

const RedX = () => <path d="M9 9l6 6M15 9l-6 6" stroke="#d32020" strokeWidth="2" />;

const viewControls: [string, React.ReactNode][] = [
  ['Detaillierungsgrad', <path key="a" d="M.5 2.5h15v11H.5z" fill="#fff" />],
  ['Bildstil', <path key="b" d="M1.5 6l4-4.5h9V10l-4 4.5h-9zM1.5 6h9v8.5M10.5 6l4-4.5" fill="#fff" />],
  [
    'Sonnenpfad',
    <g key="c">
      <circle cx="7" cy="7" r="3.5" fill="#ffd34a" stroke="#d49a10" />
      <path d="M7 0v2M7 12v2M0 7h2M12 7h2M2 2l1.5 1.5M12 2l-1.5 1.5M2 12l1.5-1.5" stroke="#d49a10" />
      <RedX />
    </g>,
  ],
  [
    'Schatten',
    <g key="d">
      <circle cx="7" cy="6" r="4.5" fill="#b9dcf5" stroke="#3b84c9" />
      <path d="M1 13.5h8" strokeWidth="1.5" />
      <RedX />
    </g>,
  ],
  [
    'Zuschneiden',
    <g key="e">
      <path d="M3.5 15V3.5H15M1 12.5h3M12.5 1v4" stroke="#1f5fa8" strokeWidth="1.5" />
      <path d="M6.5 12V7H12" />
      <RedX />
    </g>,
  ],
  [
    'Zuschneidebereich',
    <g key="f">
      <path d="M3.5 15V3.5H15M1 12.5h3" stroke="#1f5fa8" strokeWidth="1.5" />
      <path d="M6.5 12V7H9" />
      <circle cx="12.5" cy="7.5" r="2.5" fill="#b9dcf5" stroke="#3b84c9" />
      <path d="M12.5 10v4" stroke="#3b84c9" strokeWidth="2" />
    </g>,
  ],
  [
    'Temporär ausblenden',
    <g key="g">
      <path d="M1 3.5l4 6M15 3.5h-4" />
      <circle cx="5.5" cy="10.5" r="2.5" fill="#fff" />
      <path d="M8 10c1-1 2-1 2.5-.5" />
      <circle cx="12.5" cy="8" r="2.5" fill="#fff" />
    </g>,
  ],
  [
    'Verdeckte Elemente',
    <g key="h">
      <circle cx="8.5" cy="6" r="2.5" fill="#d7ecfb" stroke="#3b84c9" />
      <path d="M8.5 9v4" stroke="#3b84c9" strokeWidth="2" />
    </g>,
  ],
  [
    'Temporäre Ansicht',
    <g key="i">
      <path d="M1.5 3.5h12v9h-12z" fill="#fff" strokeDasharray="2 1" strokeWidth="2" />
      <circle cx="11" cy="10.5" r="3" fill="#eee" />
      <circle cx="11" cy="10.5" r="1" fill={INK} />
    </g>,
  ],
  [
    'Berechnungsmodell',
    <g key="j">
      <path d="M1.5 14V4.5c4-3 8-3 12 0M4.5 14V4M7.5 14V3M1 8.5h10" />
      <path d="M1.5 10v5" stroke="#d32020" strokeWidth="2" />
      <circle cx="12.5" cy="8" r="3" fill="#ffc93c" stroke="#d49a10" />
      <path d="M12.5 11v4" stroke="#3b84c9" strokeWidth="2" />
    </g>,
  ],
  [
    'Abhängigkeiten',
    <g key="k">
      <path d="M.5 1v14M15.5 1v6M1 3.5h14" />
      <path d="M2 11.5h6" strokeDasharray="2 1" />
      <path d="M9.5 10h5v4h-5z" fill="#777" />
      <path d="M10.5 10V8h3v2" />
    </g>,
  ],
];

function ViewBar() {
  return (
    <div className="mb-[2px] ml-[2px] flex h-4 shrink-0 items-center bg-[#f0f0f0] pr-[23px] text-[#222]">
      <button type="button" className="w-[79px] whitespace-pre pl-[26px] text-left">
        1 : 50
      </button>
      <div className="flex items-center gap-[5px]">
        {viewControls.map(([label, icon]) => (
          <button type="button" key={label} aria-label={label}>
            <Ico>{icon}</Ico>
          </button>
        ))}
      </div>
      <Chevron dir="left" className="ml-[6px]" />
      <div className="flex h-full flex-1 justify-center">
        <div className="h-[15px] w-[17px] bg-[#cdcdcd]" />
      </div>
      <Chevron dir="right" />
    </div>
  );
}

function ViewArea() {
  return (
    <main className="flex min-w-0 flex-1 flex-col border-l-2 border-[#cbcbcb] bg-white">
      <ViewTabs />
      <div className="flex min-h-0 flex-1">
        <div className="relative min-w-0 flex-1 overflow-hidden">
          <Drawing />
          <NavBar />
        </div>
        <div className="mr-[2px] flex w-4 shrink-0 flex-col items-center bg-[#f0f0f0] pt-[6px]">
          <Chevron dir="up" />
          <div className="my-auto h-4 w-[15px] bg-[#cdcdcd]" />
          <Chevron dir="down" className="mb-1" />
        </div>
      </div>
      <ViewBar />
    </main>
  );
}

/* ---------- properties ---------- */

interface Prop {
  label: string;
  value?: string | boolean;
  dim?: boolean;
  boxDim?: boolean;
  more?: boolean;
  focus?: boolean;
}

const groups: { title: string; rows: Prop[] }[] = [
  {
    title: 'Abhängigkeiten',
    rows: [
      { label: 'Basislinie', value: 'Wandachse', focus: true },
      { label: 'Abhängigkeit unten', value: '-0,100_01_FU_RDOK' },
      { label: 'Außenbauteil', value: true, boxDim: true, more: true },
      { label: 'Versatz gewollt', value: true, boxDim: true, more: true },
      { label: 'Versatz unten', value: '0,0000', more: true },
      { label: 'Unterkante ist fixiert', value: false, dim: true },
      { label: 'Verlängerungsabstand u...', value: '0,0000', dim: true },
      { label: 'Abhängigkeit oben', value: 'Bis Ebene: 5,000_00_EG_R...' },
      { label: 'Nicht verknüpfte Höhe', value: '5,1000', dim: true },
      { label: 'Versatz oben', value: '0,0000', more: true },
      { label: 'Oberkante ist fixiert.', value: false, dim: true },
      { label: 'Verlängerungsabstand o...', value: '0,0000', dim: true },
      { label: 'Raumbegrenzung', value: true },
      { label: 'Für Körper', value: false, dim: true },
      { label: 'Querschnitt', value: 'Vertikal' },
    ],
  },
  {
    title: 'Materialien und Oberflächen',
    rows: [
      { label: 'Materialgüte' },
      { label: 'Materialgüte Zusatz' },
      { label: 'Oberfläche 1. Seite' },
      { label: 'Oberfläche 2. Seite' },
    ].map((p) => ({ ...p, more: true })),
  },
  {
    title: 'Tragwerk',
    rows: [
      { label: 'Tragwerk', value: false },
      { label: 'Berechnungsmodell akti...', value: false, dim: true },
      { label: 'Tragwerksverwendung', value: 'Nichttragend', dim: true },
      { label: 'Fertigteilnummer', more: true },
      { label: 'Positionsnummer', more: true },
      { label: 'Schalungsfläche', more: true },
      { label: 'Statikposition', more: true },
      { label: 'Bewehrung Stahlgüte', more: true },
      { label: 'Bewehrungsgehalt LV', more: true },
      { label: 'Gewichtsanteil Sekundär...', more: true },
    ],
  },
  {
    title: 'Abmessungen',
    rows: [
      { label: 'Schalungshöhe', more: true },
      { label: 'Länge', value: '16,8000', dim: true },
      { label: 'Fläche', value: '85,680 m²', dim: true },
      { label: 'Volumen', value: '38,556 m³', dim: true },
    ],
  },
  {
    title: 'HLS',
    rows: [
      { label: 'Bauteilcode_1', more: true },
      { label: 'Bauteilcode_2', more: true },
    ],
  },
  { title: 'ID-Daten', rows: [{ label: 'Bild' }] },
];

function CheckBox({ id, checked, faded }: { id: string; checked: boolean; faded: boolean }) {
  return (
    <span className="relative ml-[3px] mt-px block h-[13px] w-[13px]">
      <input
        id={id}
        type="checkbox"
        defaultChecked={checked}
        disabled={faded}
        className="peer block h-[13px] w-[13px] appearance-none border border-[#333] bg-white disabled:border-[#ccc]"
      />
      <svg
        viewBox="0 0 13 13"
        fill="none"
        stroke={faded ? '#b5b5b5' : '#333'}
        strokeWidth="1.5"
        className="pointer-events-none absolute inset-0 hidden peer-checked:block"
        aria-hidden="true"
      >
        <path d="M2.5 6.5l3 3 5-6" />
      </svg>
    </span>
  );
}

function PropRow({ prop, id }: { prop: Prop; id: string }) {
  const dots = 'border-b border-dotted border-[#777]';
  return (
    <tr className={`h-[18px] ${prop.dim ? 'text-[#7c7c7c]' : 'text-black'}`}>
      <th scope="row" className={`border-r p-0 pl-2 text-left font-normal ${dots}`}>
        <label htmlFor={id} className="block truncate leading-[17px]">
          {prop.label}
        </label>
      </th>
      <td className={`border-r p-0 ${dots}`}>
        {typeof prop.value === 'boolean' ? (
          <CheckBox id={id} checked={prop.value} faded={Boolean(prop.dim || prop.boxDim)} />
        ) : (
          <input
            id={id}
            type="text"
            readOnly={prop.dim}
            defaultValue={prop.value ?? ''}
            className={`block h-[17px] w-full leading-[15px] ${prop.focus ? 'border border-black pl-px' : 'pb-px pl-[2px]'}`}
          />
        )}
      </td>
      <td className={`border-r p-0 ${dots}`}>
        {prop.more && (
          <button
            type="button"
            aria-label={`${prop.label} zuordnen`}
            className="mx-auto block h-4 w-[10px] border border-b-2 border-r-2 border-[#b0b0b0] bg-[#e4e4e4]"
          />
        )}
      </td>
    </tr>
  );
}

function PropertiesTable() {
  return (
    <table className="w-full table-fixed border-separate border-spacing-0">
      <colgroup>
        <col className="w-[152px]" />
        <col />
        <col className="w-3" />
      </colgroup>
      {groups.map((g) => (
        <tbody key={g.title}>
          <tr className="h-[18px]">
            <th colSpan={3} className="bg-[#dbdbdb] p-0 px-[2px] text-left font-normal text-black">
              <button type="button" className="flex h-[18px] w-full items-center justify-between pr-1">
                {g.title}
                <Ico w={7} h={9}>
                  <path d="M1 4l2.5-2.5L6 4M1 8l2.5-2.5L6 8" stroke="#000" strokeWidth="1.3" />
                </Ico>
              </button>
            </th>
          </tr>
          {g.rows.map((p) => (
            <PropRow key={p.label} prop={p} id={`${g.title}-${p.label}`} />
          ))}
        </tbody>
      ))}
    </table>
  );
}

function Properties() {
  return (
    <aside className="flex w-[335px] shrink-0 flex-col border-l-[3px] border-[#cbcbcb] bg-[#f0f0f0]">
      <PaneHeader title="Eigenschaften" />
      <button
        type="button"
        className="m-px flex h-[71px] shrink-0 items-center border border-[#cbcbcb] px-[2px] text-left text-[#444]"
      >
        <span className="flex h-[66px] w-[66px] items-center border border-[#cbcbcb] bg-white">
          <svg width="64" height="32" aria-hidden="true">
            <rect width="64" height="32" fill="#a5b4a2" />
            <path d="M0 2.5h64M0 29h64" stroke="#84b586" strokeWidth="5" />
            <path d="M0 .5h64M0 5h64M0 26.5h64M0 31.5h64M63.5 0v32" stroke="#46664a" />
          </svg>
        </span>
        <span className="ml-1 whitespace-nowrap leading-4">
          Basiswand
          <br />
          Wand_HFT_0450_0070-0310-0070_Außen
        </span>
        <Ico w={7} h={4} className="ml-auto">
          <path d="M0 0h7L3.5 4z" fill="#333" stroke="none" />
        </Ico>
      </button>
      <div className="flex h-6 shrink-0 items-start pl-px">
        <div className="relative h-[22px] w-[219px]">
          <select
            aria-label="Auswahl filtern"
            className="h-full w-full appearance-none border border-[#acacac] bg-[#e3e3e3] pl-[3px] text-black"
          >
            <option>Wände (1)</option>
          </select>
          <Ico w={10} h={6} className="pointer-events-none absolute right-1 top-2">
            <path d="M1 .5l4 4 4-4" stroke="#555" />
          </Ico>
        </div>
        <button type="button" className="ml-[6px] flex h-5 items-center gap-[5px] whitespace-nowrap text-black">
          <Ico>
            <path d="M.5 2.5 2 1h4.5v6H.5zM8.5 2.5 10 1h4.5v5h-6zM.5 9.5h6v5.5h-6z" fill="#f4f4f4" />
            <path d="M7.5 6.5h8v9h-8z" fill="#fff" />
            <path d="M9 8h5v3H9z" fill="#4a74a8" stroke="none" />
            <path d="M9.5 13.5h4" />
          </Ico>
          Typ bearbeiten
        </button>
      </div>
      <div className="flex min-h-0 flex-1 pl-px">
        <div className="w-[314px] shrink-0 overflow-hidden bg-white">
          <PropertiesTable />
        </div>
        <div className="flex flex-1 flex-col items-center pl-px">
          <Chevron dir="up" className="my-1" />
          <div className="h-[302px] w-full bg-[#cdcdcd]" />
        </div>
      </div>
    </aside>
  );
}

/* ---------- status bar and warning ---------- */

function StatusSelect({ label, value }: { label: string; value: string }) {
  return (
    <div className="relative h-[18px] w-[204px]">
      <select aria-label={label} className="h-full w-full appearance-none bg-white pl-[3px] text-[#6d6d6d]">
        <option>{value}</option>
      </select>
      <span className="pointer-events-none absolute right-0 top-0 flex h-full w-[18px] items-center justify-center border-l border-[#e6e6e6]">
        <Ico w={8} h={5}>
          <path d="M.5.5 4 4 7.5.5" stroke="#888" />
        </Ico>
      </span>
    </div>
  );
}

function StatusBar() {
  return (
    <footer className="flex h-6 shrink-0 items-center bg-[#cbcbcb] pl-px pt-[3px] text-[#1c1c1c]">
      <p className="w-[847px] whitespace-nowrap">
        Zur Auswahl klicken, TABULATOR für andere Auswahl, STRG zum Hinzufügen, UMSCHALT zum Aufheben der Auswahl.
      </p>
      <Ico>
        <path d="M1.5 7h6v8h-6z" fill={SKY} stroke={BLUE} />
        <path d="M3 7V5.5h3V7" stroke={BLUE} />
        <path d="M5.5 4.5V1.5h6v5h-2" stroke="#3f8f35" strokeWidth="1.5" fill="#bfe3b5" />
        <path d="M12.5 15V9M10.5 6.5v2l2 1.5 2-1.5v-2" />
      </Ico>
      <div className="ml-2">
        <StatusSelect label="Bearbeitungsbereich" value="" />
      </div>
      <Ico className="ml-[9px]">
        <path d="M4.5 1.5h10v5h-4l-2 2h-2v-2h-2z" fill="#ddd" stroke="#999" />
        <path d="M6 7l3 1-3 3 2 4H1z" fill="#999" stroke="none" />
      </Ico>
      <span className="ml-1">:0</span>
      <div className="ml-[25px] flex items-center gap-[11px]">
        <Ico>
          <path d="M.5 1.5h15v13H.5z" fill="#eee" />
          <path d="M.5 3h15" strokeWidth="3" />
          <path d="M3 7.5h2M7 7.5h6M3 11.5h2M7 11.5h6" strokeWidth="1.5" />
        </Ico>
        <Ico>
          <path d="M.5 1h14v14H.5z" fill="#9d9d9d" stroke="none" />
          <path d="M2 4v9M2 10.5h7M7 8l3 2.5L7 13M11.5 3v10" stroke="#d8d8d8" />
        </Ico>
      </div>
      <div className="ml-[7px]">
        <StatusSelect label="Entwurfsoption" value="Basisvorlage" />
      </div>
    </footer>
  );
}

const warningButtons: [string, React.ReactNode][] = [
  ['Vorherige Warnung', <path key="p" d="M2 6l4-4v2.5h4v3H6V10z" fill="#9a9a9a" stroke="none" />],
  ['Nächste Warnung', <path key="n" d="M10 6 6 2v2.5H2v3h4V10z" fill="#9a9a9a" stroke="none" />],
  [
    'Warnungen anzeigen',
    <g key="l" stroke="#000">
      <path d="M1.5 1.5h9v9h-9z" fill="#fff" strokeWidth="1.5" />
      <path d="M3 5.5h1M5 5.5h4M3 8.5h1M5 8.5h4" />
    </g>,
  ],
  ['Warnung erweitern', <path key="e" d="M2.5 4.5h2l3-3v9l-3-3h-2z" fill="#fff" stroke="#13137a" strokeWidth="1.5" />],
];

function WarningPopup() {
  return (
    <div
      role="dialog"
      aria-label="Warnung"
      className="absolute bottom-1 right-[5px] flex h-[111px] w-[420px] flex-col bg-white shadow-[0_2px_8px_rgba(0,0,0,0.5)]"
    >
      <div className="flex h-[30px] shrink-0 items-center justify-between pl-2 text-[#999]">
        <h2>Warnung</h2>
        <button
          type="button"
          aria-label="Schließen"
          className="mr-px mt-1 h-[19px] w-[19px] bg-[#e3e3e3] text-[10px] leading-none text-[#f8f8f8]"
        >
          x
        </button>
      </div>
      <div className="flex flex-1">
        <p className="flex-1 whitespace-nowrap bg-[#ffffe1] pl-[2px] pt-px text-[11px] leading-[13px] text-black">
          Die hervorgehobenen Wände überlappen. Wenn Revit Raumbegrenzungen findet,
          <br />
          wird eine dieser Wände möglicherweise ignoriert. Verwenden Sie die Befehle zum
          <br />
          Ausschneiden von Geometrie, um eine Wand durch die andere umschließen zu
          <br />
          lassen.
        </p>
        <div className="grid w-[18px] grid-rows-4">
          {warningButtons.map(([label, icon]) => (
            <button
              type="button"
              key={label}
              aria-label={label}
              className="flex items-center justify-center border-b-2 border-r-2 border-[#8a8a8a] bg-[#f0f0f0]"
            >
              <Ico w={12}>{icon}</Ico>
            </button>
          ))}
        </div>
      </div>
    </div>
  );
}

export default function App() {
  return (
    <div className="relative flex h-screen flex-col overflow-hidden bg-[#cbcbcb] font-[Roboto,'Open_Sans',sans-serif] text-[12px] leading-4">
      <TitleBar />
      <RibbonTabs />
      <Ribbon />
      <div className="flex h-[26px] shrink-0 items-center bg-[#e5efd7] pl-2 text-[#a3a3a3]">Ändern | Wände</div>
      <div className="flex min-h-0 flex-1 pt-[2px]">
        <ProjectBrowser />
        <ViewArea />
        <Properties />
      </div>
      <StatusBar />
      <WarningPopup />
      {/* mouse pointer */}
      <svg width="14" height="22" viewBox="0 0 14 22" className="absolute right-[220px] top-[915px]" aria-hidden="true">
        <path d="M1 1v16l3.5-3.3L7.3 20l3.2-1.4-2.7-6H13z" fill="#fff" stroke="#000" strokeWidth="1.5" />
      </svg>
    </div>
  );
}
